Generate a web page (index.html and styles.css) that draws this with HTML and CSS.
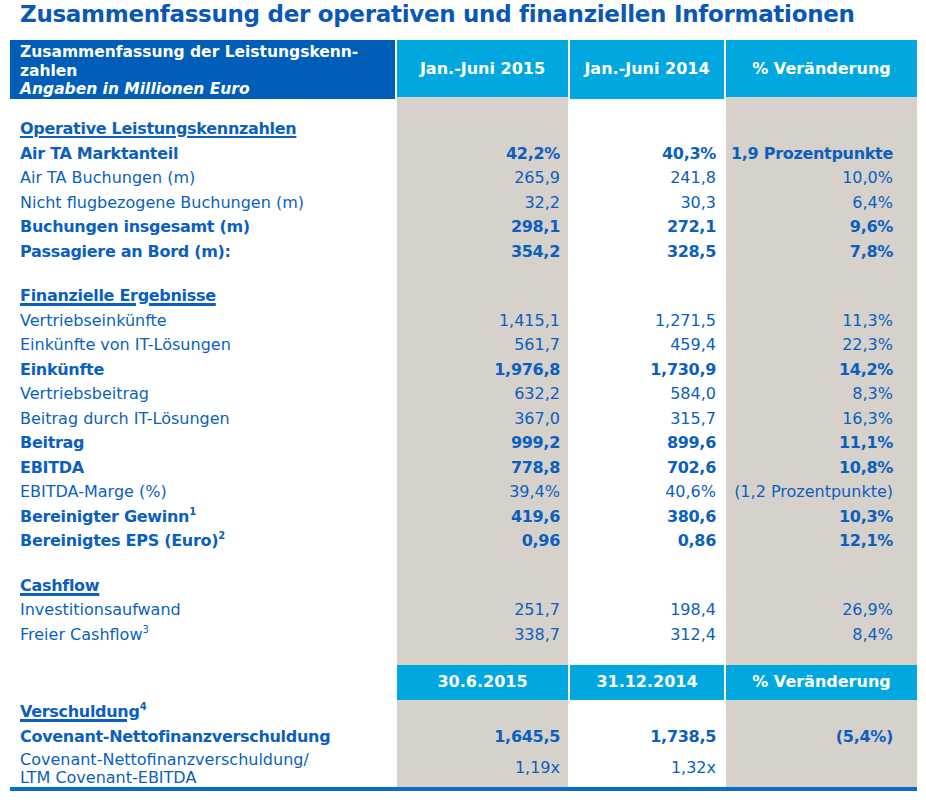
FILE: index.html
```html
<!DOCTYPE html>
<html lang="de">
<head>
<meta charset="utf-8">
<link rel="stylesheet" href="styles.css">
</head>
<body>
<h1 class="title">Zusammenfassung der operativen und finanziellen Informationen</h1>
<div class="table">
  <div class="row head">
    <div class="cell main">Zusammenfassung der Leistungskenn-<br>zahlen<br><em>Angaben in Millionen Euro</em></div>
    <div class="cell hc">Jan.-Juni 2015</div>
    <div class="cell hc">Jan.-Juni 2014</div>
    <div class="cell hc">% Veränderung</div>
  </div>
  <div class="row body spacer"><div class="cell"></div><div class="cell"></div><div class="cell"></div><div class="cell"></div></div>
  <div class="row body"><div class="cell label b"><span class="u">Operative Leistungskennzahlen</span></div><div class="cell"></div><div class="cell"></div><div class="cell"></div></div>
  <div class="row body b"><div class="cell label">Air TA Marktanteil</div><div class="cell">42,2%</div><div class="cell">40,3%</div><div class="cell">1,9 Prozentpunkte</div></div>
  <div class="row body"><div class="cell label">Air TA Buchungen (m)</div><div class="cell">265,9</div><div class="cell">241,8</div><div class="cell">10,0%</div></div>
  <div class="row body"><div class="cell label">Nicht flugbezogene Buchungen (m)</div><div class="cell">32,2</div><div class="cell">30,3</div><div class="cell">6,4%</div></div>
  <div class="row body b"><div class="cell label">Buchungen insgesamt (m)</div><div class="cell">298,1</div><div class="cell">272,1</div><div class="cell">9,6%</div></div>
  <div class="row body b"><div class="cell label">Passagiere an Bord (m):</div><div class="cell">354,2</div><div class="cell">328,5</div><div class="cell">7,8%</div></div>
  <div class="row body spacer"><div class="cell"></div><div class="cell"></div><div class="cell"></div><div class="cell"></div></div>
  <div class="row body"><div class="cell label b"><span class="u thick">Finanzielle Ergebnisse</span></div><div class="cell"></div><div class="cell"></div><div class="cell"></div></div>
  <div class="row body"><div class="cell label">Vertriebseinkünfte</div><div class="cell">1,415,1</div><div class="cell">1,271,5</div><div class="cell">11,3%</div></div>
  <div class="row body"><div class="cell label">Einkünfte von IT-Lösungen</div><div class="cell">561,7</div><div class="cell">459,4</div><div class="cell">22,3%</div></div>
  <div class="row body b"><div class="cell label">Einkünfte</div><div class="cell">1,976,8</div><div class="cell">1,730,9</div><div class="cell">14,2%</div></div>
  <div class="row body"><div class="cell label">Vertriebsbeitrag</div><div class="cell">632,2</div><div class="cell">584,0</div><div class="cell">8,3%</div></div>
  <div class="row body"><div class="cell label">Beitrag durch IT-Lösungen</div><div class="cell">367,0</div><div class="cell">315,7</div><div class="cell">16,3%</div></div>
  <div class="row body b"><div class="cell label">Beitrag</div><div class="cell">999,2</div><div class="cell">899,6</div><div class="cell">11,1%</div></div>
  <div class="row body b"><div class="cell label">EBITDA</div><div class="cell">778,8</div><div class="cell">702,6</div><div class="cell">10,8%</div></div>
  <div class="row body"><div class="cell label">EBITDA-Marge (%)</div><div class="cell">39,4%</div><div class="cell">40,6%</div><div class="cell">(1,2 Prozentpunkte)</div></div>
  <div class="row body b"><div class="cell label">Bereinigter Gewinn<sup>1</sup></div><div class="cell">419,6</div><div class="cell">380,6</div><div class="cell">10,3%</div></div>
  <div class="row body b"><div class="cell label">Bereinigtes EPS (Euro)<sup>2</sup></div><div class="cell">0,96</div><div class="cell">0,86</div><div class="cell">12,1%</div></div>
  <div class="row body spacer"><div class="cell"></div><div class="cell"></div><div class="cell"></div><div class="cell"></div></div>
  <div class="row body"><div class="cell label b"><span class="u thick">Cashflow</span></div><div class="cell"></div><div class="cell"></div><div class="cell"></div></div>
  <div class="row body"><div class="cell label">Investitionsaufwand</div><div class="cell">251,7</div><div class="cell">198,4</div><div class="cell">26,9%</div></div>
  <div class="row body"><div class="cell label">Freier Cashflow<sup>3</sup></div><div class="cell">338,7</div><div class="cell">312,4</div><div class="cell">8,4%</div></div>
  <div class="row body spacer2"><div class="cell"></div><div class="cell"></div><div class="cell"></div><div class="cell"></div></div>
  <div class="row head2">
    <div class="cell blank"></div>
    <div class="cell hc">30.6.2015</div>
    <div class="cell hc">31.12.2014</div>
    <div class="cell hc">% Veränderung</div>
  </div>
  <div class="row body"><div class="cell label b"><span class="u thick">Verschuldung</span><sup>4</sup></div><div class="cell"></div><div class="cell"></div><div class="cell"></div></div>
  <div class="row body b"><div class="cell label">Covenant-Nettofinanzverschuldung</div><div class="cell">1,645,5</div><div class="cell">1,738,5</div><div class="cell">(5,4%)</div></div>
  <div class="row body last"><div class="cell label">Covenant-Nettofinanzverschuldung/<br>LTM Covenant-EBITDA</div><div class="cell">1,19x</div><div class="cell">1,32x</div><div class="cell"></div></div>
</div>
</body>
</html>
```

FILE: styles.css
```css
html, body {
  margin: 0;
  padding: 0;
  background: #ffffff;
}

*, *::before, *::after {
  box-sizing: border-box;
}

body {
  font-family: "DejaVu Sans", Verdana, sans-serif;
  color: #0b5fbe;
  width: 926px;
}

.title {
  margin: 0;
  padding: 0 0 0 20px;
  height: 40px;
  font-size: 23px;
  line-height: 28px;
  letter-spacing: -0.3px;
  font-weight: bold;
  color: #0a57b5;
  white-space: nowrap;
}

.table {
  margin-left: 10px;
  width: 907px;
  border-bottom: 4px solid #0a6fc2;
}

.row {
  display: grid;
  grid-template-columns: 385px 171px 154px 191px;
  column-gap: 2px;
}

.cell {
  font-size: 16px;
  line-height: 24.5px;
  text-align: right;
  white-space: nowrap;
}

.body > .cell:nth-child(2) { padding-right: 8px; }
.body > .cell:nth-child(3) { padding-right: 8px; }
.body > .cell:nth-child(4) { padding-right: 24px; }

.body > .cell:nth-child(2),
.body > .cell:nth-child(4) {
  background: #d6d1cb;
}

.label {
  text-align: left;
  padding-left: 10px;
}

.b {
  font-weight: bold;
  letter-spacing: -0.3px;
}

.spacer .cell { height: 20px; }
.spacer2 .cell { height: 18px; }

.u {
  text-decoration: underline;
  text-decoration-thickness: 2px;
  text-underline-offset: 2px;
}

.u.thick {
  text-decoration-thickness: 3px;
}

sup {
  font-size: 10px;
  line-height: 0;
  vertical-align: 7px;
  letter-spacing: 0;
}

.head {
  height: 57px;
}

.head .cell {
  color: #ffffff;
  font-weight: bold;
}

.head .main {
  background: #005eb8;
  padding: 3px 0 0 10px;
  text-align: left;
  font-size: 15.5px;
  line-height: 18.5px;
}

.head .main em {
  font-style: italic;
}

.hc {
  background: #00a8df;
  color: #ffffff;
  font-weight: bold;
  display: flex;
  align-items: center;
  justify-content: center;
  padding-right: 0;
}

.head2 {
  height: 35px;
}

.last .cell {
  height: 38px;
  display: flex;
  align-items: center;
  justify-content: flex-end;
}

.last .label {
  display: block;
  line-height: 18px;
  padding-top: 2px;
}
```
